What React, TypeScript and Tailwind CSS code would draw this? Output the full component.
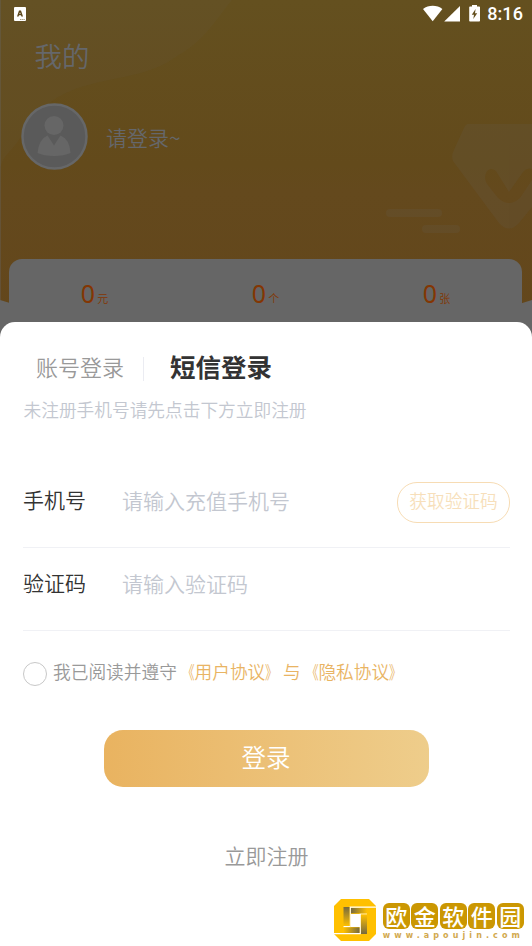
import type { ReactNode } from "react";

const stats = [
  { value: 0, unit: "元" },
  { value: 0, unit: "个" },
  { value: 0, unit: "张" },
];

const StatusBar = () => (
  <div className="flex h-[27px] items-center justify-between pl-3.5 pr-[9px] text-white">
    <svg width="12" height="14" viewBox="0 0 12 14">
      <rect width="12" height="14" rx="1" fill="#fff" />
      <path d="M3 9.5 5 3.5H7L9 9.5H7.4L7 8.3H5L4.6 9.5ZM5.4 7H6.6L6 5.2Z" fill="#5c471c" />
      <path d="M6 12.5H11" stroke="#a79c83" strokeDasharray="1.5 0.6" />
    </svg>
    <div className="flex items-center">
      <svg width="58" height="18" viewBox="0 0 58 18" fill="#fff">
        <path d="M1 4C6.5-.2 15-.2 20.4 4L10.7 16.2Z" />
        <path d="M38 1V16.5H22.2Z" />
        <path
          fillRule="evenodd"
          d="M50 0H55V1.4H57.2Q58 1.4 58 2.2V15.7Q58 16.5 57.2 16.5H48Q47.2 16.5 47.2 15.7V2.2Q47.2 1.4 48 1.4H50ZM53.6 4 49.8 9.8H52L51.3 14 55.2 8.2H53Z"
        />
      </svg>
      <span className="ml-[7px] font-['Roboto',sans-serif] text-[18px] font-medium leading-[27px] tracking-[0.1px]">
        8:16
      </span>
    </div>
  </div>
);

const Backdrop = () => (
  <svg className="absolute inset-0" width="532" height="340" viewBox="0 0 532 340">
    <defs>
      <linearGradient id="gold" x1="0" y1="0" x2="0" y2="1">
        <stop offset="0" stopColor="#64501f" />
        <stop offset="0.48" stopColor="#634a1b" />
        <stop offset="0.56" stopColor="#64491d" />
        <stop offset="1" stopColor="#63461b" />
      </linearGradient>
    </defs>
    <path d="M0 0H532V300Q266 385 0 300Z" fill="url(#gold)" />
    <path
      d="M0 0H232C214 22 204 41 177 56C145 80 108 75 68 92C36 106 26 134 10 151Q3 158 0 168Z"
      fill="#666"
      opacity="0.08"
    />
    <path d="M.5 0V300" stroke="#666" opacity="0.35" />
    <g fill="#666" opacity="0.14">
      <path
        fillRule="evenodd"
        d="M468 124H532V207L519 223Q509 234 499 223L453 161Q451 156 454 150L464 128Q466 124 468 124ZM487 171Q483 177 487 184L498 198Q509 208 520 198L532 180V169Q526 167 521 175L509 192L496 171Q491 167 487 171Z"
      />
      <rect x="386" y="209" width="56" height="8" rx="4" />
      <rect x="422" y="225" width="38" height="8" rx="4" />
    </g>
  </svg>
);

const Avatar = () => (
  <svg width="67" height="67" viewBox="0 0 67 67">
    <circle cx="33.5" cy="33.5" r="32" fill="#5a5a5a" stroke="#666768" strokeWidth="2.5" />
    <circle cx="33" cy="22.5" r="9.5" fill="#666" />
    <path d="M26.5 32.5 33 42.5 39.5 32.5Q48.5 36 49.5 50Q43 53 33 53Q23 53 16.5 50Q18 36 26.5 32.5Z" fill="#666" />
  </svg>
);

interface FieldProps {
  label: string;
  placeholder: string;
  className: string;
  children?: ReactNode;
}

const Field = ({ label, placeholder, className, children }: FieldProps) => (
  <div className={`flex items-start border-b border-[#f0f1f5] text-[21px] leading-[30px] ${className}`}>
    <span className="w-[99px] text-[#333]">{label}</span>
    <span className="mt-px flex-1 text-[#c3c7d0]">{placeholder}</span>
    {children}
  </div>
);

// full-width title marks, drawn narrow against the name
const Agreement = ({ name }: { name: string }) => (
  <>
    <span className="inline-block origin-right scale-x-[0.7]">《</span>
    {name}
    <span className="inline-block origin-left scale-x-[0.7]">》</span>
  </>
);

const Watermark = () => (
  <div className="flex items-center gap-[6px] self-end pr-[8px]">
    <svg width="43" height="43" viewBox="0 0 43 43">
      <defs>
        <linearGradient id="fadeRight">
          <stop offset="0" stopColor="#75693f" />
          <stop offset="1" stopColor="#ffc000" />
        </linearGradient>
        <linearGradient id="fadeLeft" x1="1" x2="0">
          <stop offset="0" stopColor="#75693f" />
          <stop offset="1" stopColor="#ffc000" />
        </linearGradient>
        <linearGradient id="fadeDown" x1="0" y1="0" x2="0" y2="1">
          <stop offset="0" stopColor="#75693f" />
          <stop offset="1" stopColor="#ffc000" />
        </linearGradient>
        <linearGradient id="fadeUp" x1="0" y1="1" x2="0" y2="0">
          <stop offset="0" stopColor="#75693f" />
          <stop offset="1" stopColor="#ffc000" />
        </linearGradient>
      </defs>
      <path d="M7 0H35L42 7V35L35 42H7L0 35V7Z" fill="#ffc000" />
      <path d="M17 15H26V28H17Z" fill="#fff" />
      <path d="M42 8.2H16.2V27.6H9.5M0 34.6H26.2V15H33" fill="none" stroke="#fff" strokeWidth="1.2" />
      <path d="M9.5 8H15.5V27H9.5Z" fill="url(#fadeDown)" />
      <path d="M17 9H33V14.3H17Z" fill="url(#fadeRight)" />
      <path d="M9.5 28.4H25.5V34H9.5Z" fill="url(#fadeLeft)" />
      <path d="M27 15.6H33V35H27Z" fill="url(#fadeUp)" />
    </svg>
    <div className="mt-1 flex flex-col">
      <div className="flex gap-[1.5px]">
        {["欧", "金", "软", "件", "园"].map((char) => (
          <span
            key={char}
            className="flex h-[26px] w-[27px] items-center justify-center rounded-[6px] bg-[#cb9702] pb-0.5 text-[22px] font-medium leading-[26px] text-white"
          >
            {char}
          </span>
        ))}
      </div>
      <span className="font-['DejaVu_Sans',sans-serif] text-[8px] font-bold leading-[14px] tracking-[4.1px] text-[#d2a94e]">
        www.apoujin.com
      </span>
    </div>
  </div>
);

const App = () => {
  return (
    <div className="flex h-[946px] w-[532px] flex-col overflow-hidden bg-white font-['Noto_Sans_CJK_SC',sans-serif] font-[350]">
      <header className="relative h-[340px] shrink-0 bg-[#666]">
        <Backdrop />
        <div className="relative flex flex-col">
          <StatusBar />
          <h1 className="mt-2 pl-[34.5px] text-[27.5px] leading-10 text-[#65676b]">我的</h1>
          <div className="mt-[27.5px] flex items-center gap-[18px] pl-[21px]">
            <Avatar />
            <span className="mt-px text-[21px] leading-[30px] text-[#65676b]">请登录~</span>
          </div>
          <div className="ml-[9px] mr-2.5 mt-[89px] grid h-[82px] grid-cols-3 items-start rounded-t-[13px] bg-[#666] pt-[18.5px] text-[#833603]">
            {stats.map(({ value, unit }) => (
              <div key={unit} className="flex items-baseline justify-center gap-0.5 leading-8">
                <span className="font-['Noto_Sans',sans-serif] text-[25px] font-normal">{value}</span>
                <span className="text-[11px]">{unit}</span>
              </div>
            ))}
          </div>
        </div>
      </header>

      <main className="relative -mt-[18.5px] flex flex-1 flex-col rounded-t-[15px] bg-white">
        <div className="flex items-center pl-9 pt-[24px]">
          <span className="text-[22px] leading-10 text-[#999]">账号登录</span>
          <span className="ml-[19px] mr-[26px] mt-1.5 h-6 w-px bg-[#ebecf2]" />
          <span className="text-[25.5px] font-bold leading-10 text-[#333]">短信登录</span>
        </div>
        <p className="mt-0.5 pl-[23.5px] text-[17.7px] leading-[42px] text-[#c3c7d0]">未注册手机号请先点击下方立即注册</p>

        <div className="ml-[23px] mr-[22px] mt-[52px] flex flex-col">
          <Field label="手机号" placeholder="请输入充值手机号" className="h-[66px] pt-[2px]">
            <button className="-mt-[2px] h-[41px] w-[113px] rounded-[20px] border border-[#f7dcb4] pb-1 text-[17.7px] leading-[34px] text-[#f7dfbb]">
              获取验证码
            </button>
          </Field>
          <Field label="验证码" placeholder="请输入验证码" className="h-[83px] pt-[19px]" />
        </div>

        <div className="mt-[25.5px] flex items-center pl-[23px] text-[17.7px] leading-[30px] text-[#999]">
          <span className="mr-1.5 mt-[5px] h-6 w-6 rounded-full border border-[#c8c8c8]" />
          我已阅读并遵守
          <span className="text-[#e9b463]">
            <Agreement name="用户协议" />与<Agreement name="隐私协议" />
          </span>
        </div>

        <button className="mx-auto mt-[43.5px] h-[57px] w-[325px] rounded-[19px] bg-linear-to-r from-[#e9b360] to-[#eecd8b] pb-[3px] text-[24.5px] leading-[54px] text-white">
          登录
        </button>
        <span className="mt-[52px] pl-px text-center text-[21px] leading-8 text-[#999]">立即注册</span>
        <div className="mt-7 flex flex-col">
          <Watermark />
        </div>
      </main>
    </div>
  );
};

export default App;
